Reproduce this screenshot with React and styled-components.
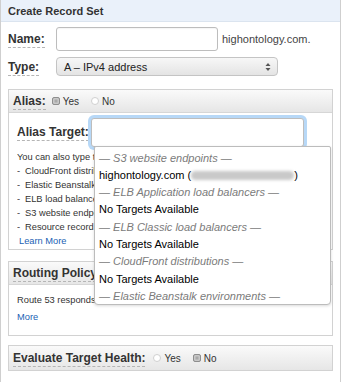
import React from 'react';
import styled, { createGlobalStyle } from 'styled-components';

const GlobalStyle = createGlobalStyle`
  body {
    margin: 0;
    background: #fff;
    font-family: 'Liberation Sans', Arial, sans-serif;
    color: #333;
  }
`;

const Frame = styled.div`
  width: 341px;
  height: 382px;
  box-sizing: border-box;
  border-left: 1px solid #cfcfcf;
  border-right: 1px solid #cfcfcf;
  overflow: hidden;
`;

const Header = styled.div`
  height: 22px;
  background: #eaf1fa;
  border-bottom: 1px solid #dbe4ef;
  box-sizing: border-box;
  padding-left: 7px;
  display: flex;
  align-items: center;
  font-size: 11px;
  font-weight: bold;
  color: #333;
`;

const Body = styled.div`
  padding: 5px 8px 0 7px;
`;

const FieldRow = styled.div`
  display: flex;
  align-items: center;
  height: ${p => p.h}px;
  margin-top: ${p => p.mt || 0}px;
`;

const Label = styled.span`
  display: inline-block;
  width: ${p => p.w || 'auto'};
  flex: none;
  font-size: 12px;
  font-weight: bold;
  color: #333;
  span {
    border-bottom: 1px dashed #b5b5b5;
    padding-bottom: 1px;
  }
`;

const TextInput = styled.div`
  width: ${p => p.w}px;
  height: ${p => p.h}px;
  box-sizing: border-box;
  border: 1px solid #bdbdbd;
  border-radius: 3px;
  background: #fff;
  box-shadow: ${p => (p.focused ? '0 0 0 3px #b7d8f7' : 'inset 0 1px 1px rgba(0,0,0,0.04)')};
  position: relative;
`;

const Suffix = styled.span`
  margin-left: 4px;
  font-size: 11px;
  color: #444;
`;

const Select = styled.div`
  width: 222px;
  height: 19px;
  box-sizing: border-box;
  border: 1px solid #c4c4c4;
  border-radius: 4px;
  background: linear-gradient(#f7f7f7, #e4e4e4);
  display: flex;
  align-items: center;
  justify-content: space-between;
  padding: 0 6px 0 7px;
  font-size: 11px;
  color: #222;
`;

const Panel = styled.div`
  margin-top: ${p => p.mt}px;
  border: 1px solid #d2d2d2;
  width: 325px;
  box-sizing: border-box;
`;

const PanelHead = styled.div`
  height: ${p => p.h || 23}px;
  background: linear-gradient(#fafafa, #e6e6e6);
  border-bottom: ${p => (p.closed ? 'none' : '1px solid #d6d6d6')};
  box-sizing: border-box;
  display: flex;
  align-items: center;
  padding-left: 4px;
`;

const RadioGroup = styled.div`
  display: flex;
  align-items: center;
  margin-left: ${p => p.ml}px;
  gap: 12px;
`;

const RadioOpt = styled.label`
  display: flex;
  align-items: center;
  gap: 3px;
  font-size: 10px;
  color: #333;
`;

const RadioDot = styled.span`
  width: 8px;
  height: 8px;
  box-sizing: border-box;
  border-radius: ${p => (p.on ? '2px' : '50%')};
  background: ${p => (p.on ? '#a9a9a9' : '#fff')};
  border: 1px solid ${p => (p.on ? '#8e8e8e' : '#d0d0d0')};
  box-shadow: ${p => (p.on ? 'inset 0 0 0 1.5px #c8c8c8' : 'none')};
`;

const AliasBody = styled.div`
  padding: 4px 8px 1px 8px;
`;

const TargetRow = styled.div`
  display: flex;
  align-items: center;
  height: 30px;
`;

const Hint = styled.div`
  margin-top: 3px;
  font-size: 9.3px;
  line-height: 14px;
  color: #333;
  white-space: nowrap;
  overflow: hidden;
`;

const HintItem = styled.div`
  display: flex;
  &::before {
    content: '-';
    width: 8px;
    flex: none;
  }
`;

const Link = styled.a`
  color: #1a5fb4;
  text-decoration: none;
  margin-left: ${p => p.ml || 0}px;
`;

const RoutingText = styled.div`
  padding: 7px 8px 9px 8px;
  font-size: 9.3px;
  line-height: 17px;
  color: #333;
`;

const Dropdown = styled.div`
  position: absolute;
  left: 2px;
  top: 27px;
  width: 237px;
  height: 159px;
  box-sizing: border-box;
  background: #fff;
  border: 1px solid #bcbcbc;
  border-radius: 2px 2px 4px 4px;
  box-shadow: 0 1px 3px rgba(0,0,0,0.15);
  padding: 3px 0 0 4px;
  z-index: 2;
  overflow: hidden;
`;

const Group = styled.div`
  font-size: 11px;
  font-style: italic;
  color: #7b7b7b;
  height: 17.3px;
  line-height: 17px;
  white-space: nowrap;
`;

const Option = styled.div`
  font-size: 11px;
  color: #000;
  height: 17.3px;
  line-height: 17px;
  white-space: nowrap;
`;

const Blurred = styled.span`
  display: inline-block;
  width: 103px;
  height: 9px;
  vertical-align: -1px;
  border-radius: 5px;
  background: #c9c9c9;
  filter: blur(1.6px);
`;

const Arrows = () => (
  <svg width="6" height="10" viewBox="0 0 6 10">
    <path d="M3 1 L5.5 4 H0.5 Z" fill="#555" />
    <path d="M3 9 L5.5 6 H0.5 Z" fill="#555" />
  </svg>
);

const Radios = ({ ml, value }) => (
  <RadioGroup ml={ml}>
    <RadioOpt><RadioDot on={value === 'yes'} />Yes</RadioOpt>
    <RadioOpt><RadioDot on={value === 'no'} />No</RadioOpt>
  </RadioGroup>
);

const targets = [
  ['S3 website endpoints', 'host'],
  ['ELB Application load balancers', 'none'],
  ['ELB Classic load balancers', 'none'],
  ['CloudFront distributions', 'none'],
  ['Elastic Beanstalk environments', null],
];

export default function App() {
  return (
    <Frame>
      <GlobalStyle />
      <Header>Create Record Set</Header>
      <Body>
        <FieldRow h={24}>
          <Label w="48px"><span>Name:</span></Label>
          <TextInput w={162} h={24} />
          <Suffix>highontology.com.</Suffix>
        </FieldRow>
        <FieldRow h={19} mt={6}>
          <Label w="48px"><span>Type:</span></Label>
          <Select>
            <span>A – IPv4 address</span>
            <Arrows />
          </Select>
        </FieldRow>

        <Panel mt={13}>
          <PanelHead>
            <Label><span>Alias:</span></Label>
            <Radios ml={6} value="yes" />
          </PanelHead>
          <AliasBody>
            <TargetRow>
              <Label w="74px"><span>Alias Target:</span></Label>
              <TextInput w={213} h={29} focused>
                <Dropdown>
                  {targets.map(([group, kind]) => (
                    <React.Fragment key={group}>
                      <Group>— {group} —</Group>
                      {kind === 'host' && (
                        <Option>highontology.com (<Blurred />)</Option>
                      )}
                      {kind === 'none' && <Option>No Targets Available</Option>}
                    </React.Fragment>
                  ))}
                </Dropdown>
              </TextInput>
            </TargetRow>
            <Hint>
              <div>You can also type the domain name for the resource. Examples:</div>
              <HintItem>CloudFront distribution domain name: d111111abcdef8.cloudfront.net</HintItem>
              <HintItem>Elastic Beanstalk environment CNAME: example.elasticbeanstalk.com</HintItem>
              <HintItem>ELB load balancer DNS name: example-1.us-east-2.elb.amazonaws.com</HintItem>
              <HintItem>S3 website endpoint: s3-website.us-east-2.amazonaws.com</HintItem>
              <HintItem>Resource record set in this hosted zone: www.example.com</HintItem>
              <Link ml={2} href="#">Learn More</Link>
            </Hint>
          </AliasBody>
        </Panel>

        <Panel mt={11}>
          <PanelHead>
            <Label><span>Routing Policy:</span></Label>
          </PanelHead>
          <RoutingText>
            Route 53 responds to queries based only on values in this record. <Link href="#">Learn</Link><br />
            <Link href="#">More</Link>
          </RoutingText>
        </Panel>

        <Panel mt={9}>
          <PanelHead h={24} closed>
            <Label><span>Evaluate Target Health:</span></Label>
            <Radios ml={8} value="no" />
          </PanelHead>
        </Panel>
      </Body>
    </Frame>
  );
}
